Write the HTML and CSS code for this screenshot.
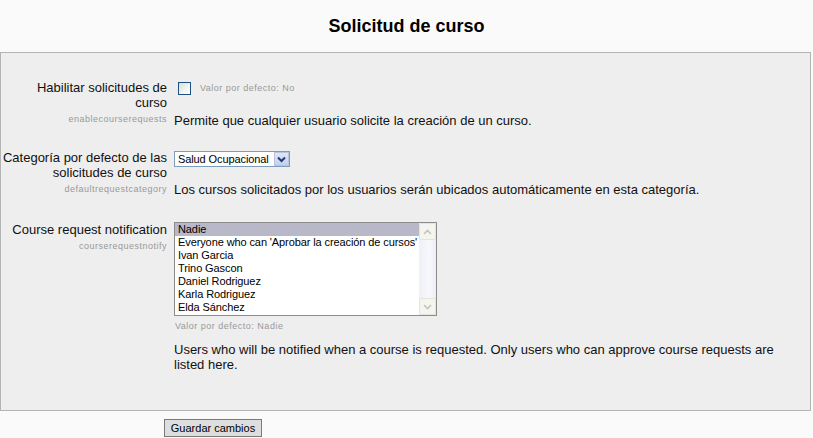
FILE: index.html
```html
<!DOCTYPE html>
<html lang="es">
<head>
<meta charset="utf-8">
<title>Solicitud de curso</title>
<link rel="stylesheet" href="styles.css">
</head>
<body>
<h2 class="title">Solicitud de curso</h2>
<form class="settings">
  <div class="panel">
    <div class="row row-1">
      <div class="label">
        <label>Habilitar solicitudes de<br>curso</label>
        <span class="setting">enablecourserequests</span>
      </div>
      <div class="control">
        <div class="line">
          <span class="checkbox"></span>
          <span class="default">Valor por defecto: No</span>
        </div>
        <div class="desc desc-1">Permite que cualquier usuario solicite la creación de un curso.</div>
      </div>
    </div>

    <div class="row row-2">
      <div class="label">
        <label>Categoría por defecto de las<br>solicitudes de curso</label>
        <span class="setting">defaultrequestcategory</span>
      </div>
      <div class="control">
        <div class="select">
          <span class="select-value">Salud Ocupacional</span>
          <span class="select-btn">
            <svg width="9" height="7" viewBox="0 0 9 7"><path d="M1 1.5 L4.5 5 L8 1.5" fill="none" stroke="#1f3a7a" stroke-width="2"/></svg>
          </span>
        </div>
        <div class="desc desc-2">Los cursos solicitados por los usuarios serán ubicados automáticamente en esta categoría.</div>
      </div>
    </div>

    <div class="row row-3">
      <div class="label">
        <label>Course request notification</label>
        <span class="setting">courserequestnotify</span>
      </div>
      <div class="control">
        <div class="listbox">
          <div class="options">
            <div class="option selected">Nadie</div>
            <div class="option">Everyone who can 'Aprobar la creación de cursos'</div>
            <div class="option">Ivan Garcia</div>
            <div class="option">Trino Gascon</div>
            <div class="option">Daniel Rodriguez</div>
            <div class="option">Karla Rodriguez</div>
            <div class="option">Elda Sánchez</div>
          </div>
          <div class="scrollbar">
            <span class="sb-btn">
              <svg width="9" height="6" viewBox="0 0 9 6"><path d="M1 5 L4.5 1.5 L8 5" fill="none" stroke="#c4c4bc" stroke-width="1.6"/></svg>
            </span>
            <span class="sb-track"></span>
            <span class="sb-btn">
              <svg width="9" height="6" viewBox="0 0 9 6"><path d="M1 1 L4.5 4.5 L8 1" fill="none" stroke="#c4c4bc" stroke-width="1.6"/></svg>
            </span>
          </div>
        </div>
        <div class="default default-block">Valor por defecto: Nadie</div>
        <div class="desc desc-3">Users who will be notified when a course is requested. Only users who can approve course requests are listed here.</div>
      </div>
    </div>
  </div>
  <div class="actions">
    <button type="button" class="save">Guardar cambios</button>
  </div>
</form>
</body>
</html>
```

FILE: styles.css
```css
html, body {
  margin: 0;
  padding: 0;
}

body {
  background: #fafafa;
  font-family: "Liberation Sans", Arial, sans-serif;
  color: #000;
}

.title {
  margin: 0;
  height: 52px;
  line-height: 52px;
  text-align: center;
  font-size: 18px;
  font-weight: bold;
}

.settings {
  margin: 0;
}

.panel {
  margin-right: 2px;
  border: 1px solid #b4b4b4;
  background: #eeeeee;
  padding-top: 27px;
  box-sizing: content-box;
  height: 330px;
}

.row {
  display: grid;
  grid-template-columns: 166px 1fr;
  column-gap: 7px;
}

.row-1 {
  margin-bottom: 22px;
}

.row-2 {
  margin-bottom: 25px;
}

.label {
  text-align: right;
  font-size: 13px;
  line-height: 15px;
  color: #111;
}

.label label {
  display: block;
}

.setting {
  display: block;
  margin-top: 2px;
  font-family: "Liberation Sans", Arial, sans-serif;
  font-size: 9px;
  letter-spacing: 0.5px;
  line-height: 14px;
  color: #999;
}

.control {
  font-size: 13px;
  line-height: 15px;
  padding-right: 18px;
}

.line {
  display: flex;
  align-items: center;
  height: 15px;
}

.checkbox {
  display: block;
  box-sizing: border-box;
  width: 13px;
  height: 13px;
  margin: 1px 9px 0 4px;
  border: 1px solid #1c5180;
  background: linear-gradient(135deg, #dcdcd7 0%, #f4f4f0 60%, #ffffff 100%);
}

.default {
  font-family: "Liberation Sans", Arial, sans-serif;
  font-size: 9px;
  letter-spacing: 0.5px;
  line-height: 12px;
  color: #999;
}

.desc {
  color: #111;
}

.desc-1 {
  margin-top: 18px;
}

.desc-2 {
  margin-top: 15px;
}

.desc-3 {
  margin-top: 10px;
}

.select {
  display: flex;
  box-sizing: border-box;
  width: 116px;
  height: 16px;
  margin-top: 1px;
  border: 1px solid #7f9db9;
  background: #fff;
  font-size: 11px;
  line-height: 14px;
  letter-spacing: -0.1px;
}

.select-value {
  flex: 1;
  padding-left: 3px;
  white-space: nowrap;
  overflow: hidden;
}

.select-btn {
  display: flex;
  align-items: center;
  justify-content: center;
  box-sizing: border-box;
  width: 15px;
  height: 14px;
  border: 1px solid #b8c4e0;
  background: linear-gradient(#dfe6f8, #c4d0f0);
}

.listbox {
  display: flex;
  box-sizing: border-box;
  width: 263px;
  height: 94px;
  border: 1px solid #8c8c8c;
  background: #fff;
}

.options {
  flex: 1;
  font-size: 11px;
  line-height: 13px;
  letter-spacing: -0.1px;
}

.option {
  padding-left: 3px;
  white-space: nowrap;
}

.option.selected {
  background: #b8b8c8;
}

.scrollbar {
  display: flex;
  flex-direction: column;
  width: 17px;
  background: linear-gradient(90deg, #eef0f6, #f7f8fc 60%, #eceef6);
}

.sb-btn {
  display: flex;
  align-items: center;
  justify-content: center;
  box-sizing: border-box;
  height: 17px;
  border: 1px solid #e4e4dc;
  border-radius: 2px;
  background: #f5f5f0;
}

.sb-track {
  flex: 1;
}

.default-block {
  margin-top: 4px;
  padding-left: 1px;
}

.actions {
  padding: 8px 0 0 164px;
}

.save {
  display: block;
  width: 98px;
  height: 18px;
  padding: 0;
  border: 1px solid #7a7a7a;
  background: #dedede;
  font-family: "Liberation Sans", Arial, sans-serif;
  font-size: 11px;
  line-height: 16px;
  color: #000;
  border-radius: 0;
}
```
